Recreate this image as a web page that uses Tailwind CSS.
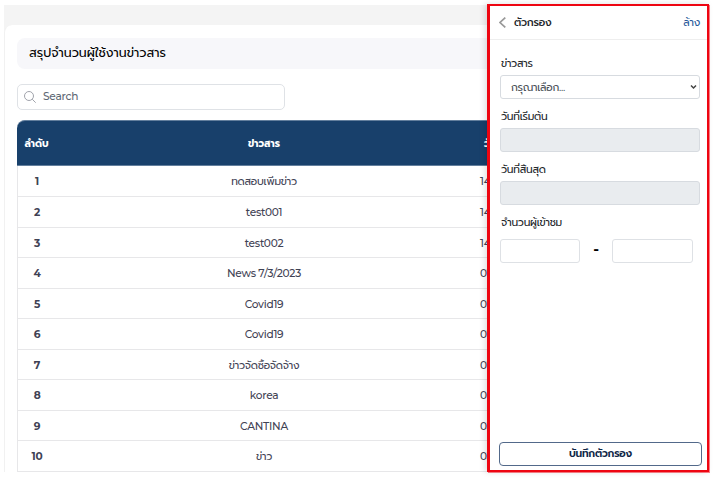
<!DOCTYPE html>
<html lang="th">
<head>
<meta charset="utf-8">
<title>สรุปจำนวนผู้ใช้งานข่าวสาร</title>
<script src="https://cdn.jsdelivr.net/npm/@tailwindcss/browser@4"></script>
</head>
<body class="relative h-[478px] w-[716px] overflow-hidden bg-white font-['Montserrat','Prompt','Noto_Sans_Thai','Noto_Sans',sans-serif] text-[10.6px] tracking-[-0.25px] text-[#3f4254]">
<div class="ml-1 mt-[5px] h-[467px] w-[704px] overflow-hidden bg-[#f4f4f4] pt-5">
  <main class="h-full rounded-tl-lg border-l border-[#f1f1f1] bg-white pl-3 pt-[13px]">
    <h1 class="flex h-[31px] items-center rounded-l-lg bg-[#f7f7fa] pl-3 text-[12.5px] tracking-normal text-black">สรุปจำนวนผู้ใช้งานข่าวสาร</h1>
    <div class="mt-[15px] flex h-[26px] w-[268px] items-center gap-[7px] rounded-[5px] border border-[#dfe2e6] pl-1.5 font-medium text-[#5e6874]">
      <svg class="size-3" viewBox="0 0 12 12" fill="none" stroke="#a0a3ab"><circle cx="5" cy="5" r="4.5"/><path d="M8.2 8.2 11.7 11.7"/></svg>
      <span>Search</span>
    </div>
    <table class="mt-[10px] w-[700px] table-fixed border-separate border-spacing-0 text-center">
      <colgroup><col class="w-[39px]"><col class="w-[416px]"><col></colgroup>
      <thead><tr class="h-[46px] text-[10px] tracking-normal text-white">
        <th class="rounded-tl-lg border-y border-[#637f9d] bg-[#18406b]">ลำดับ</th>
        <th class="border-y border-[#637f9d] bg-[#18406b]">ข่าวสาร</th>
        <th class="border-y border-[#637f9d] bg-[#18406b] pl-3 text-left">วันที่</th>
      </tr></thead>
      <tbody id="rows"></tbody>
    </table>
  </main>
</div>
<aside class="absolute left-[487px] top-1 flex h-[468px] w-[222px] flex-col border-2 border-l-3 border-[#ee0511] bg-white shadow-[-2px_0_6px_rgba(0,0,0,0.13),1px_1px_0_#ff8088]">
  <header class="flex h-[34px] shrink-0 items-center border-b border-[#eeeeee] pl-[9px] pr-[7px] text-[#212529]">
    <svg class="h-[11px] w-[7px]" viewBox="0 0 7 11" fill="none" stroke="#999" stroke-width="1.7"><path d="M6.3.6 1 5.5l5.3 4.9"/></svg>
    <h2 class="ml-2 font-medium">ตัวกรอง</h2>
    <span class="ml-auto text-[#26599a]">ล้าง</span>
  </header>
  <form class="flex grow flex-col pl-[10px] pt-4 text-[#212529]">
    <label class="h-[19px] pl-px leading-4">ข่าวสาร</label>
    <div class="flex h-6 w-[200px] items-center justify-between rounded-[3px] border border-[#d7dbe0] pl-[10px] pr-[2px] text-[#495057]"><span class="mt-px">กรุณาเลือก...</span><svg class="h-1.5 w-[7px]" viewBox="0 0 7 6" fill="none" stroke="#444" stroke-width="1.5"><path d="M1 1.5 3.5 4 6 1.5"/></svg></div>
    <label class="mt-[10px] h-[19px] pl-px leading-4">วันที่เริ่มต้น</label>
    <div class="h-6 w-[200px] rounded-[3px] border border-[#d7dbe0] bg-[#e9ecef]"></div>
    <label class="mt-[10px] h-[19px] pl-px leading-4">วันที่สิ้นสุด</label>
    <div class="h-6 w-[200px] rounded-[3px] border border-[#d7dbe0] bg-[#e9ecef]"></div>
    <label class="mt-[10px] pl-px leading-4">จำนวนผู้เข้าชม</label>
    <div class="mt-2 flex h-6 items-center">
      <div class="h-6 w-20 rounded-[3px] border border-[#dee1e5]"></div>
      <span class="mb-[3px] w-8 text-center text-[15px] font-bold text-black">-</span>
      <div class="h-6 w-[81px] rounded-[3px] border border-[#dee1e5]"></div>
    </div>
    <button type="button" class="mb-1 -ml-px mt-auto h-6 w-[203px] rounded-[4px] border border-[#52698a] text-[10.4px] tracking-[-0.2px] font-semibold text-[#0e2646]">บันทึกตัวกรอง</button>
  </form>
</aside>
<script>
const items = [['ทดสอบเพิ่มข่าว','14/'],['test001','14/'],['test002','14/'],['News 7/3/2023','07/'],['Covid19','07/'],['Covid19','07/'],['ข่าวจัดซื้อจัดจ้าง','07/'],['korea','06/'],['CANTINA','03/'],['ข่าว','03/']];
document.getElementById('rows').innerHTML = items.map((r,i)=>`<tr class="${i===0||i%2===1?'h-[31px]':'h-[30px]'} font-medium"><td class="border-b border-l border-[#e7e7e9] pt-0.5 font-bold">${i+1}</td><td class="border-b border-[#e7e7e9] pt-0.5 ${/[a-z]/i.test(r[0])?'':'font-normal'}">${r[0]}</td><td class="border-b border-[#e7e7e9] pl-2 pt-0.5 text-left">${r[1]}</td></tr>`).join('');
</script>
</body>
</html>
